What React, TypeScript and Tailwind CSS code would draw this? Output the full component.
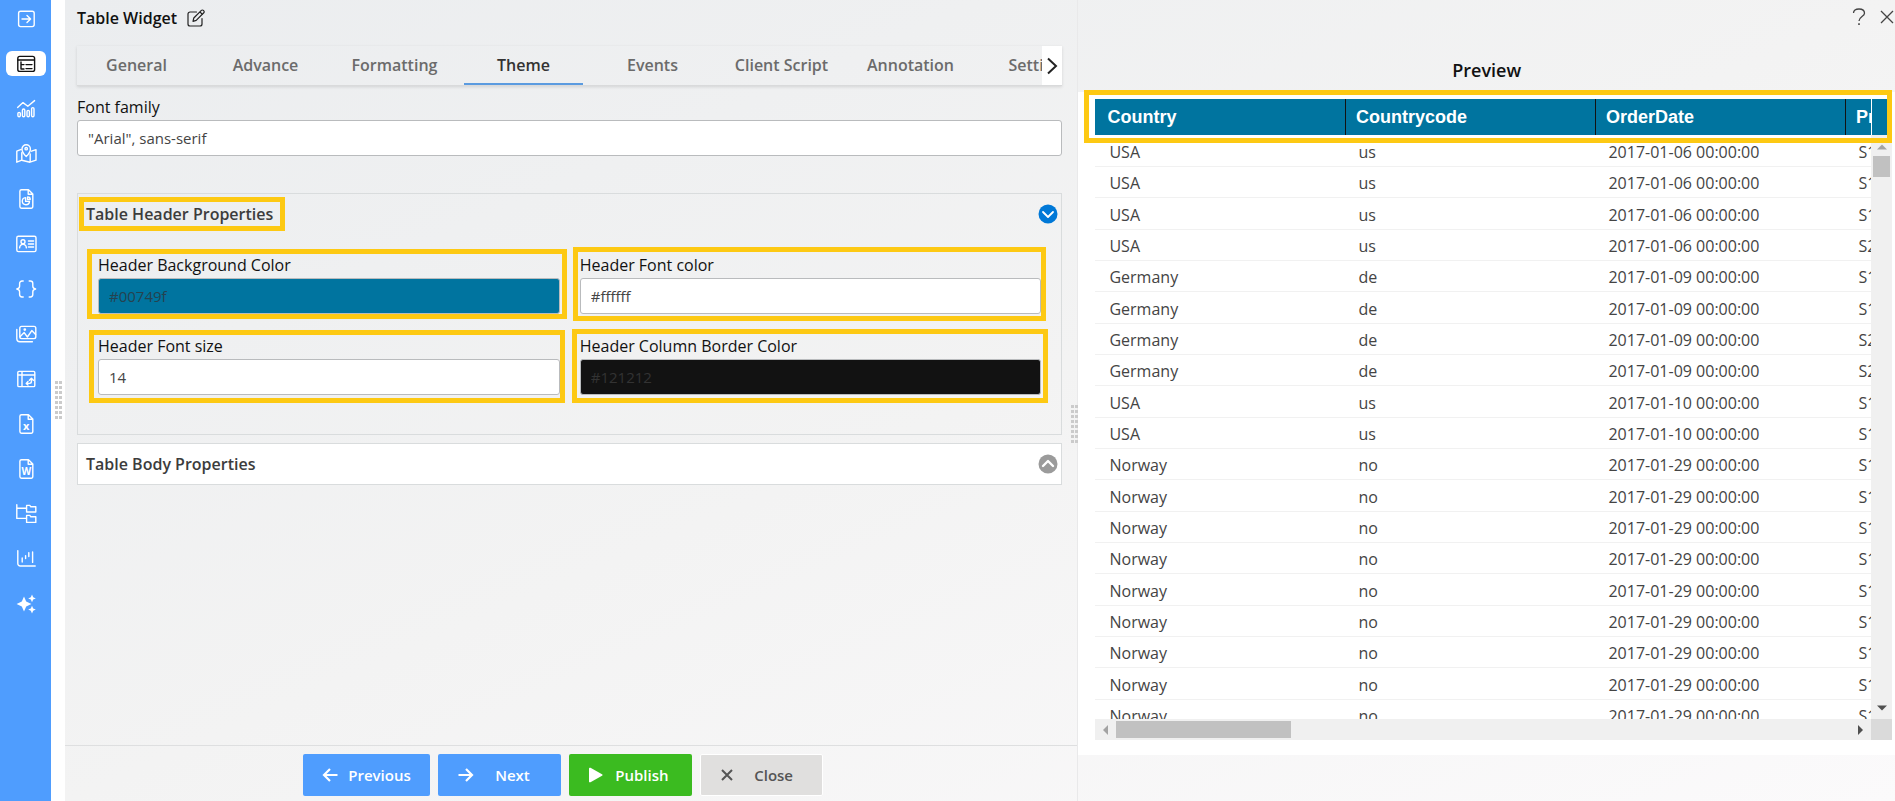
import { useState } from 'react';
import type { ReactNode } from 'react';
import clsx from 'clsx';

interface NavItem {
  label: string;
  icon: ReactNode;
}

interface OrderRow {
  country: string;
  code: string;
  date: string;
  product: string;
}

const docOutline = (
  <path d="M6.5 1.7h7l4.3 4.3v12.6a1.6 1.6 0 0 1-1.6 1.6H6.5a1.6 1.6 0 0 1-1.6-1.6V3.3a1.6 1.6 0 0 1 1.6-1.6zM13.2 1.9v4.4h4.4" />
);

const navItems: NavItem[] = [
  {
    label: 'Expand',
    icon: (
      <>
        <rect x="3.6" y="3.2" width="15.6" height="15.4" rx="2" />
        <path d="M7 11h8.6M12 7.4l3.6 3.6-3.6 3.6" />
      </>
    ),
  },
  {
    label: 'Table',
    icon: (
      <>
        <rect x="2.8" y="3.4" width="16.8" height="15" rx="2" />
        <path d="M3 7h16.4M6 9v7h3M6 11.6h3M11 11.6h6M11 15.6h6" />
      </>
    ),
  },
  {
    label: 'Chart',
    icon: (
      <>
        <path d="M2.6 9.4L8 4.6l4.8 3.6 6.8-5.6" />
        <rect x="2.9" y="14.4" width="2.4" height="4.4" rx="1.2" />
        <rect x="7.4" y="11" width="2.4" height="7.8" rx="1.2" />
        <rect x="12" y="12.4" width="2.4" height="6.4" rx="1.2" />
        <rect x="16.6" y="9.6" width="2.4" height="9.2" rx="1.2" />
      </>
    ),
  },
  {
    label: 'Map',
    icon: (
      <>
        <path d="M11.2 13.4S7 9.4 7 5.9a4.2 4.2 0 0 1 8.4 0c0 3.5-4.2 7.5-4.2 7.5z" />
        <circle cx="11.2" cy="5.7" r="1.2" />
        <path d="M6.2 6.4L1.8 8.2v11l5-2 8.2 2 6-2V6.6l-4.4 1.6M6.8 9.6v7.4M15.2 11v8" />
      </>
    ),
  },
  {
    label: 'Report',
    icon: (
      <>
        {docOutline}
        <path d="M10.6 9.6a3.6 3.6 0 1 0 3.9 3.8h-3.9z" />
        <path d="M12.6 8.9v2.6h2.6a2.6 2.6 0 0 0-2.6-2.6z" />
      </>
    ),
  },
  {
    label: 'Card',
    icon: (
      <>
        <rect x="1.8" y="3.2" width="19.2" height="15.4" rx="1.6" />
        <circle cx="8" cy="8.8" r="2" />
        <path d="M4.6 14.8c.3-2.4 1.6-3.4 3.4-3.4s3.1 1 3.4 3.4M13.4 8h5.2M13.4 11h5.2M13.4 14h5.2" />
      </>
    ),
  },
  {
    label: 'Code',
    icon: (
      <path d="M8.2 3H7a2.4 2.4 0 0 0-2.4 2.4v2.8c0 1.6-1 2.4-2.8 2.8 1.8.4 2.8 1.2 2.8 2.8v2.8A2.4 2.4 0 0 0 7 19h1.2M14.2 3h1.2a2.4 2.4 0 0 1 2.4 2.4v2.8c0 1.6 1 2.4 2.8 2.8-1.8.4-2.8 1.2-2.8 2.8v2.8a2.4 2.4 0 0 1-2.4 2.4h-1.2" />
    ),
  },
  {
    label: 'Image',
    icon: (
      <>
        <rect x="4.8" y="3.4" width="16" height="12.2" rx="1.8" />
        <path d="M1.8 6.4v9.2a3.2 3.2 0 0 0 3.2 3.2h12.4M5.2 13.6l4-4 3.2 4.4 4.4-6.4 3.8 4" />
        <circle cx="9.8" cy="6.6" r="0.7" />
      </>
    ),
  },
  {
    label: 'Pivot',
    icon: (
      <>
        <rect x="2.8" y="3.4" width="17" height="15.2" rx="1.2" />
        <path d="M3 7h16.6M7 3.6v14.8M11.4 15.4h3.2a1.8 1.8 0 0 0 1.8-1.8v-3M14.4 12.2l2-2 2 2M13 13.6l-1.8 1.8 1.8 1.6" />
      </>
    ),
  },
  {
    label: 'Excel',
    icon: (
      <>
        {docOutline}
        <text x="11.3" y="17.4" textAnchor="middle" fontSize="11" fontWeight="700" fill="currentColor" stroke="none">
          x
        </text>
      </>
    ),
  },
  {
    label: 'Word',
    icon: (
      <>
        {docOutline}
        <text x="11.3" y="17" textAnchor="middle" fontSize="10" fontWeight="700" fill="currentColor" stroke="none">
          W
        </text>
      </>
    ),
  },
  {
    label: 'Hierarchy',
    icon: (
      <>
        <path d="M1.8 1.8v13.6h9M1.8 5.2h9" />
        <path d="M11.6 2.4h3.2l1 1.4h5V9h-9.2zM11.6 12.4h3.2l1 1.4h5v5.6h-9.2z" />
      </>
    ),
  },
  {
    label: 'Candlestick',
    icon: <path d="M2.8 2.6v13A2.4 2.4 0 0 0 5.2 18h15M7.2 10v4M10.6 7.6v3M13.8 4.6v4M17.6 4v10.4" />,
  },
  {
    label: 'AI',
    icon: (
      <g fill="currentColor" stroke="none">
        <path d="M9 3.4l2.2 5.2 5.2 2.4-5.2 2.4L9 18.6l-2.2-5.2L1.6 11l5.2-2.4z" />
        <path d="M17 1.6l1.2 2.6 2.6 1.2-2.6 1.2L17 9.2l-1.2-2.6-2.6-1.2 2.6-1.2z" />
        <path d="M17 12.8l1.2 2.6 2.6 1.2-2.6 1.2-1.2 2.6-1.2-2.6-2.6-1.2 2.6-1.2z" />
      </g>
    ),
  },
];

const tabs = ['General', 'Advance', 'Formatting', 'Theme', 'Events', 'Client Script', 'Annotation', 'Settings'];

const makeRows = (count: number, country: string, code: string, date: string): OrderRow[] =>
  Array.from({ length: count }, () => ({ country, code, date: `${date} 00:00:00`, product: 'S18_1749' }));

const rows: OrderRow[] = [
  ...makeRows(4, 'USA', 'us', '2017-01-06'),
  ...makeRows(4, 'Germany', 'de', '2017-01-09'),
  ...makeRows(2, 'USA', 'us', '2017-01-10'),
  ...makeRows(9, 'Norway', 'no', '2017-01-29'),
];
[3, 6, 7].forEach((i) => {
  rows[i].product = 'S24_2022';
});

function Highlight({ className }: { className: string }) {
  return <div className={clsx('pointer-events-none absolute z-10 border-[5px] border-[#fdc913]', className)} />;
}

function Grip({ className }: { className?: string }) {
  return (
    <div className={clsx('grid grid-cols-2 gap-x-px gap-y-[2px]', className)}>
      {Array.from({ length: 16 }, (_, i) => (
        <span key={i} className="size-[3px] bg-[#cbcbcb]" />
      ))}
    </div>
  );
}

function Sidebar() {
  return (
    <nav className="flex w-[51px] shrink-0 flex-col items-center gap-5 bg-[#4f9dfe] pt-[6px]">
      {navItems.map((item, i) => (
        <button
          key={item.label}
          type="button"
          aria-label={item.label}
          className={clsx(
            'flex h-[25px] w-10 items-center justify-center rounded-md',
            i === 1 ? 'bg-white text-[#111]' : 'text-white'
          )}
        >
          <svg
            viewBox="0 0 22 22"
            className="size-[22px]"
            fill="none"
            stroke="currentColor"
            strokeWidth="1.4"
            strokeLinecap="round"
            strokeLinejoin="round"
          >
            {item.icon}
          </svg>
        </button>
      ))}
    </nav>
  );
}

interface FieldProps {
  id: string;
  label: string;
  value: string;
  inputClass?: string;
  highlight?: string;
}

function Field({ id, label, value, inputClass = 'bg-white text-[#444]', highlight }: FieldProps) {
  return (
    <div className="relative">
      <label htmlFor={id} className="block pb-px text-[16px] leading-[23px] text-[#111]">
        {label}
      </label>
      <input
        id={id}
        defaultValue={value}
        className={clsx('block h-9 w-full rounded-[3px] border border-[#b9bbbd] px-[10px] text-[15px]', inputClass)}
      />
      {highlight && <Highlight className={highlight} />}
    </div>
  );
}

function CircleChevron({ up, className }: { up?: boolean; className: string }) {
  return (
    <svg viewBox="0 0 20 20" className={clsx('size-5', className)}>
      <circle cx="10" cy="10" r="9.5" fill="currentColor" />
      <path
        d={up ? 'M5 12l5-5 5 5' : 'M5 8l5 5 5-5'}
        fill="none"
        stroke="white"
        strokeWidth={up ? 2.4 : 1.8}
        strokeLinecap="round"
        strokeLinejoin="round"
      />
    </svg>
  );
}

function TabBar() {
  const [active, setActive] = useState('Theme');

  return (
    <div className="relative mt-[14px] flex h-[40px] overflow-hidden border-b border-[#d9dadb] shadow-[0_1px_3px_rgba(0,0,0,0.12)]">
      <div role="tablist" className="flex gap-[10px]">
        {tabs.map((tab) => (
          <button
            key={tab}
            type="button"
            role="tab"
            aria-selected={tab === active}
            onClick={() => setActive(tab)}
            className={clsx(
              'w-[119px] shrink-0 border-b-2 pt-px text-[16px] font-semibold whitespace-nowrap',
              tab === active ? 'border-[#5b9be0] text-[#333]' : 'border-transparent text-[#6b6b6b]'
            )}
          >
            {tab}
          </button>
        ))}
      </div>
      <button
        type="button"
        aria-label="Scroll tabs"
        className="absolute inset-y-0 right-0 flex w-5 items-center justify-center bg-white text-[#222]"
      >
        <svg viewBox="0 0 12 18" className="h-[18px] w-3" fill="none" stroke="currentColor" strokeWidth="2">
          <path d="M2 1.5L10 9l-8 7.5" />
        </svg>
      </button>
    </div>
  );
}

function HeaderProperties() {
  return (
    <section className="mt-[37px] h-[242px] border border-[#d9dcdd] px-5">
      <div className="-mx-3 flex h-10 items-center justify-between">
        <h2 className="relative text-[16px] leading-[22px] font-semibold text-[#3c3c3c]">
          Table Header Properties
          <Highlight className="-top-[6px] -right-3 -bottom-[6px] -left-[7px]" />
        </h2>
        <button type="button" aria-label="Collapse header properties" className="-mr-[5px]">
          <CircleChevron className="text-[#0078d7]" />
        </button>
      </div>
      <div className="mt-5 grid grid-cols-2 gap-x-5 gap-y-[21px]">
        <Field
          id="header-bg"
          label="Header Background Color"
          value="#00749f"
          inputClass="bg-[#00749f] text-[#25424f]"
          highlight="-top-[5px] -right-[7px] -bottom-[5px] -left-[11px]"
        />
        <Field
          id="header-font"
          label="Header Font color"
          value="#ffffff"
          highlight="-top-[7px] -right-[5px] -bottom-[7px] -left-[7px]"
        />
        <Field
          id="header-size"
          label="Header Font size"
          value="14"
          highlight="-top-[5px] -right-[5px] -bottom-2 -left-[9px]"
        />
        <Field
          id="header-border"
          label="Header Column Border Color"
          value="#121212"
          inputClass="bg-[#121212] text-[#333]"
          highlight="-top-[6px] -right-[7px] -bottom-2 -left-2"
        />
      </div>
    </section>
  );
}

function FooterButtons() {
  const base = 'flex h-[42px] items-center rounded-[2px] text-[15px] font-semibold';

  return (
    <footer className="mt-auto flex h-[56px] items-start justify-center gap-2 border-t border-[#dedfe0] pt-2 pr-4">
      <button type="button" className={clsx(base, 'w-[127px] gap-[10px] bg-[#4f9dfe] pl-[19px] text-white')}>
        <svg viewBox="0 0 16 14" className="h-[14px] w-4" fill="none" stroke="currentColor" strokeWidth="2.2">
          <path d="M15.5 7H2M8 1L2 7l6 6" />
        </svg>
        Previous
      </button>
      <button type="button" className={clsx(base, 'w-[123px] gap-[21px] bg-[#4f9dfe] pl-5 text-white')}>
        <svg viewBox="0 0 16 14" className="h-[14px] w-4" fill="none" stroke="currentColor" strokeWidth="2.2">
          <path d="M.5 7H14M8 1l6 6-6 6" />
        </svg>
        Next
      </button>
      <button type="button" className={clsx(base, 'w-[123px] gap-3 bg-[#3bbb20] pl-5 text-white')}>
        <svg viewBox="0 0 14 16" className="h-4 w-[14px]" fill="currentColor">
          <path d="M1.5.8C.8.4 0 .8 0 1.600v12.800c0 .8.8 1.200 1.500.8l11.500-6.400c.7-.4.7-1.200 0-1.600z" />
        </svg>
        Publish
      </button>
      <button
        type="button"
        className={clsx(base, 'w-[123px] gap-[21px] border border-white bg-[#e0dfde] pl-5 text-[#555]')}
      >
        <svg viewBox="0 0 12 12" className="size-3" fill="none" stroke="currentColor" strokeWidth="2">
          <path d="M1 1l10 10M11 1L1 11" />
        </svg>
        Close
      </button>
    </footer>
  );
}

function Editor() {
  return (
    <main className="relative flex min-w-0 flex-[1013_1_0px] flex-col">
      <div className="pr-[15px] pl-3">
        <header className="flex h-8 items-center gap-[10px] pt-1">
          <h1 className="text-[16px] font-semibold text-[#111]">Table Widget</h1>
          <button type="button" aria-label="Rename widget" className="text-[#222]">
            <svg
              viewBox="0 0 18 18"
              className="size-[18px]"
              fill="none"
              stroke="currentColor"
              strokeWidth="1.2"
              strokeLinejoin="round"
              strokeLinecap="round"
            >
              <path d="M9.500 3H3a2 2 0 0 0-2 2v10a2 2 0 0 0 2 2h10a2 2 0 0 0 2-2V9.500" />
              <path d="M6 12.400l.8-3.400L14.400 1.400a1.400 1.400 0 0 1 2 0l.4.4a1.400 1.400 0 0 1 0 2L9.200 11.400zM13 3l2.400 2.400" />
            </svg>
          </button>
        </header>
        <TabBar />
        <div className="mt-[10px]">
          <Field id="font-family" label="Font family" value={'"Arial", sans-serif'} />
        </div>
        <HeaderProperties />
        <section className="mt-2 flex h-[42px] items-center justify-between border border-[#d9dcdd] bg-white pr-[3px] pl-2">
          <h2 className="text-[16px] font-semibold text-[#3c3c3c]">Table Body Properties</h2>
          <button type="button" aria-label="Expand body properties">
            <CircleChevron up className="text-[#9b9b9b]" />
          </button>
        </section>
      </div>
      <FooterButtons />
      <Grip className="absolute top-[405px] -right-px" />
    </main>
  );
}

function Arrow({ d, className }: { d: string; className: string }) {
  return (
    <svg viewBox="0 0 10 10" className={clsx('size-[10px]', className)} fill="currentColor">
      <path d={d} />
    </svg>
  );
}

function PreviewTable() {
  return (
    <div className="relative mr-[3px] ml-[17px] grid min-h-0 flex-1 grid-cols-[minmax(0,1fr)_21px] grid-rows-[36px_minmax(0,1fr)_21px]">
      <div className="col-span-2 row-span-2 grid min-h-0 grid-cols-subgrid grid-rows-subgrid">
        <div className="row-span-2 min-h-0 overflow-hidden">
          <table className="w-[1000px] table-fixed border-collapse text-left">
            <thead className="bg-[#00749f] font-['Liberation_Sans',Arial,sans-serif] text-[18px] text-white">
              <tr className="h-9">
                {['Country', 'Countrycode', 'OrderDate', 'ProductCode'].map((name, i) => (
                  <th
                    key={name}
                    className={clsx(
                      'border-[#121212] py-0 font-bold',
                      i < 3 && 'border-r',
                      i === 0 ? 'pl-[12px]' : 'pl-[10px]'
                    )}
                  >
                    {name}
                  </th>
                ))}
              </tr>
            </thead>
            <tbody className="text-[16px] leading-5 text-[#444]">
              {rows.map((row, i) => (
                <tr key={i} className="h-[31px] border-b border-[#f1f1f1] [&:nth-child(3n)]:h-8">
                  <td className="py-0 pt-[3px] pl-[14px]">{row.country}</td>
                  <td className="py-0 pt-[3px] pl-[13px]">{row.code}</td>
                  <td className="py-0 pt-[3px] pl-[13px]">{row.date}</td>
                  <td className="py-0 pt-[3px] pl-[13px]">{row.product}</td>
                </tr>
              ))}
            </tbody>
          </table>
        </div>
        <div className="mr-[5px] border-l border-white bg-[#00749f]" />
        <div className="flex flex-col items-center bg-[#f0f0f0] pt-[7px]">
          <Arrow d="M0 7.500L5 2.500l5 5z" className="text-[#a3a3a3]" />
          <div className="mt-[4px] h-[21px] w-[17px] bg-[#c1c1c1]" />
          <Arrow d="M0 2.500h10l-5 5z" className="mt-auto mb-[6px] text-[#505050]" />
        </div>
      </div>
      <div className="flex items-center bg-[#f0f0f0] pl-[6px]">
        <Arrow d="M7 0v10L2 5z" className="text-[#a3a3a3]" />
        <div className="ml-[5px] h-[17px] w-[175px] bg-[#c1c1c1]" />
        <Arrow d="M3 0l5 5-5 5z" className="mr-[6px] ml-auto text-[#505050]" />
      </div>
      <div className="bg-[#dadada]" />
      <Highlight className="-top-[9px] right-0 -left-[11px] h-[53px]" />
    </div>
  );
}

function Preview() {
  return (
    <aside className="flex min-w-0 flex-[817_1_0px] flex-col border-l border-[#e9e9ea]">
      <div className="flex h-8 items-center justify-end gap-[14px] pt-px text-[#444]">
        <button type="button" aria-label="Help">
          <svg viewBox="0 0 14 18" className="h-[18px] w-[14px]" fill="none" stroke="currentColor" strokeWidth="1.3">
            <path d="M1.500 5C1.500 2.500 3.500 1 7 1s5.500 1.600 5.500 4.200C12.500 8.500 7 8.800 7 13" />
            <path d="M6.200 16.200h1.600" strokeWidth="1.8" />
          </svg>
        </button>
        <button type="button" aria-label="Close dialog" className="mr-px">
          <svg viewBox="0 0 14 14" className="size-[14px]" fill="none" stroke="currentColor" strokeWidth="1.3">
            <path d="M1 1l12 12M13 1L1 13" />
          </svg>
        </button>
      </div>
      <h2 className="h-[60px] pt-6 text-center text-[18px] leading-7 font-semibold text-[#111]">Preview</h2>
      <div className="mb-[46px] flex min-h-0 flex-1 flex-col bg-white pt-[7px] pb-[15px]">
        <PreviewTable />
      </div>
    </aside>
  );
}

export default function App() {
  return (
    <div className="flex h-screen overflow-hidden bg-white font-['Open_Sans','Segoe_UI',sans-serif]">
      <Sidebar />
      <div className="w-[14px] shrink-0 pt-[381px] pl-1">
        <Grip className="w-[7px]" />
      </div>
      <div className="flex min-w-0 flex-1 bg-linear-to-br from-[#ebedef] via-[#f3f3f3] to-[#fbfafb]">
        <Editor />
        <Preview />
      </div>
    </div>
  );
}
